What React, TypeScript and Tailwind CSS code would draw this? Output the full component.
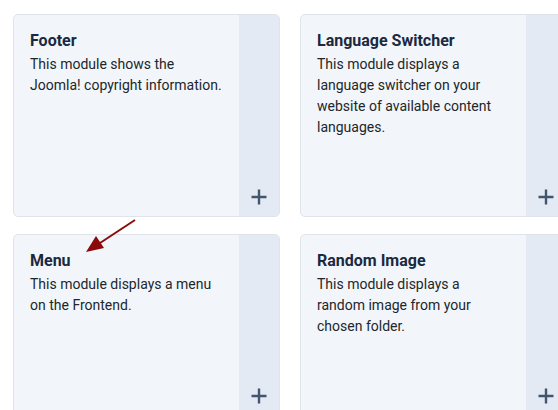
import React from "react";

const cards = [
  { title: "Footer", desc: "This module shows the Joomla! copyright information." },
  {
    title: "Language Switcher",
    desc: "This module displays a language switcher on your website of available content languages.",
  },
  { title: "Menu", desc: "This module displays a menu on the Frontend." },
  { title: "Random Image", desc: "This module displays a random image from your chosen folder." },
];

function Plus() {
  return (
    <svg width="16" height="16" viewBox="0 0 16 16" className="block">
      <path d="M8 0.5V15.5M0.5 8H15.5" stroke="#44556f" strokeWidth="2.4" fill="none" />
    </svg>
  );
}

export default function App() {
  return (
    <div
      className="relative w-[558px] h-[410px] overflow-hidden bg-white"
      style={{ fontFamily: "Roboto, 'Liberation Sans', sans-serif" }}
    >
      <div className="grid grid-cols-[267px_267px] gap-x-5 gap-y-[17px] pl-[13px] pt-[14px]">
        {cards.map((c) => (
          <div
            key={c.title}
            className="flex rounded-[5px] border border-[#dfe4ea] bg-[#f2f6fb] overflow-hidden"
          >
            <div className="flex-1 pl-4 pr-4 pt-[14px] pb-[78px]">
              <div className="text-base leading-6 font-bold text-[#1a2940]">{c.title}</div>
              <div className="mt-[1px] text-sm leading-[21px] text-[#22262a]">{c.desc}</div>
            </div>
            <div className="w-10 bg-[#e3eaf4] flex items-end justify-center pb-[11px]">
              <Plus />
            </div>
          </div>
        ))}
      </div>
      <svg
        className="absolute left-0 top-0 pointer-events-none"
        width="558"
        height="410"
        viewBox="0 0 558 410"
      >
        <line x1="135" y1="220" x2="100" y2="243" stroke="#8b0a0a" strokeWidth="2" />
        <polygon points="86,252 96,236 104,248" fill="#8b0a0a" />
      </svg>
    </div>
  );
}
